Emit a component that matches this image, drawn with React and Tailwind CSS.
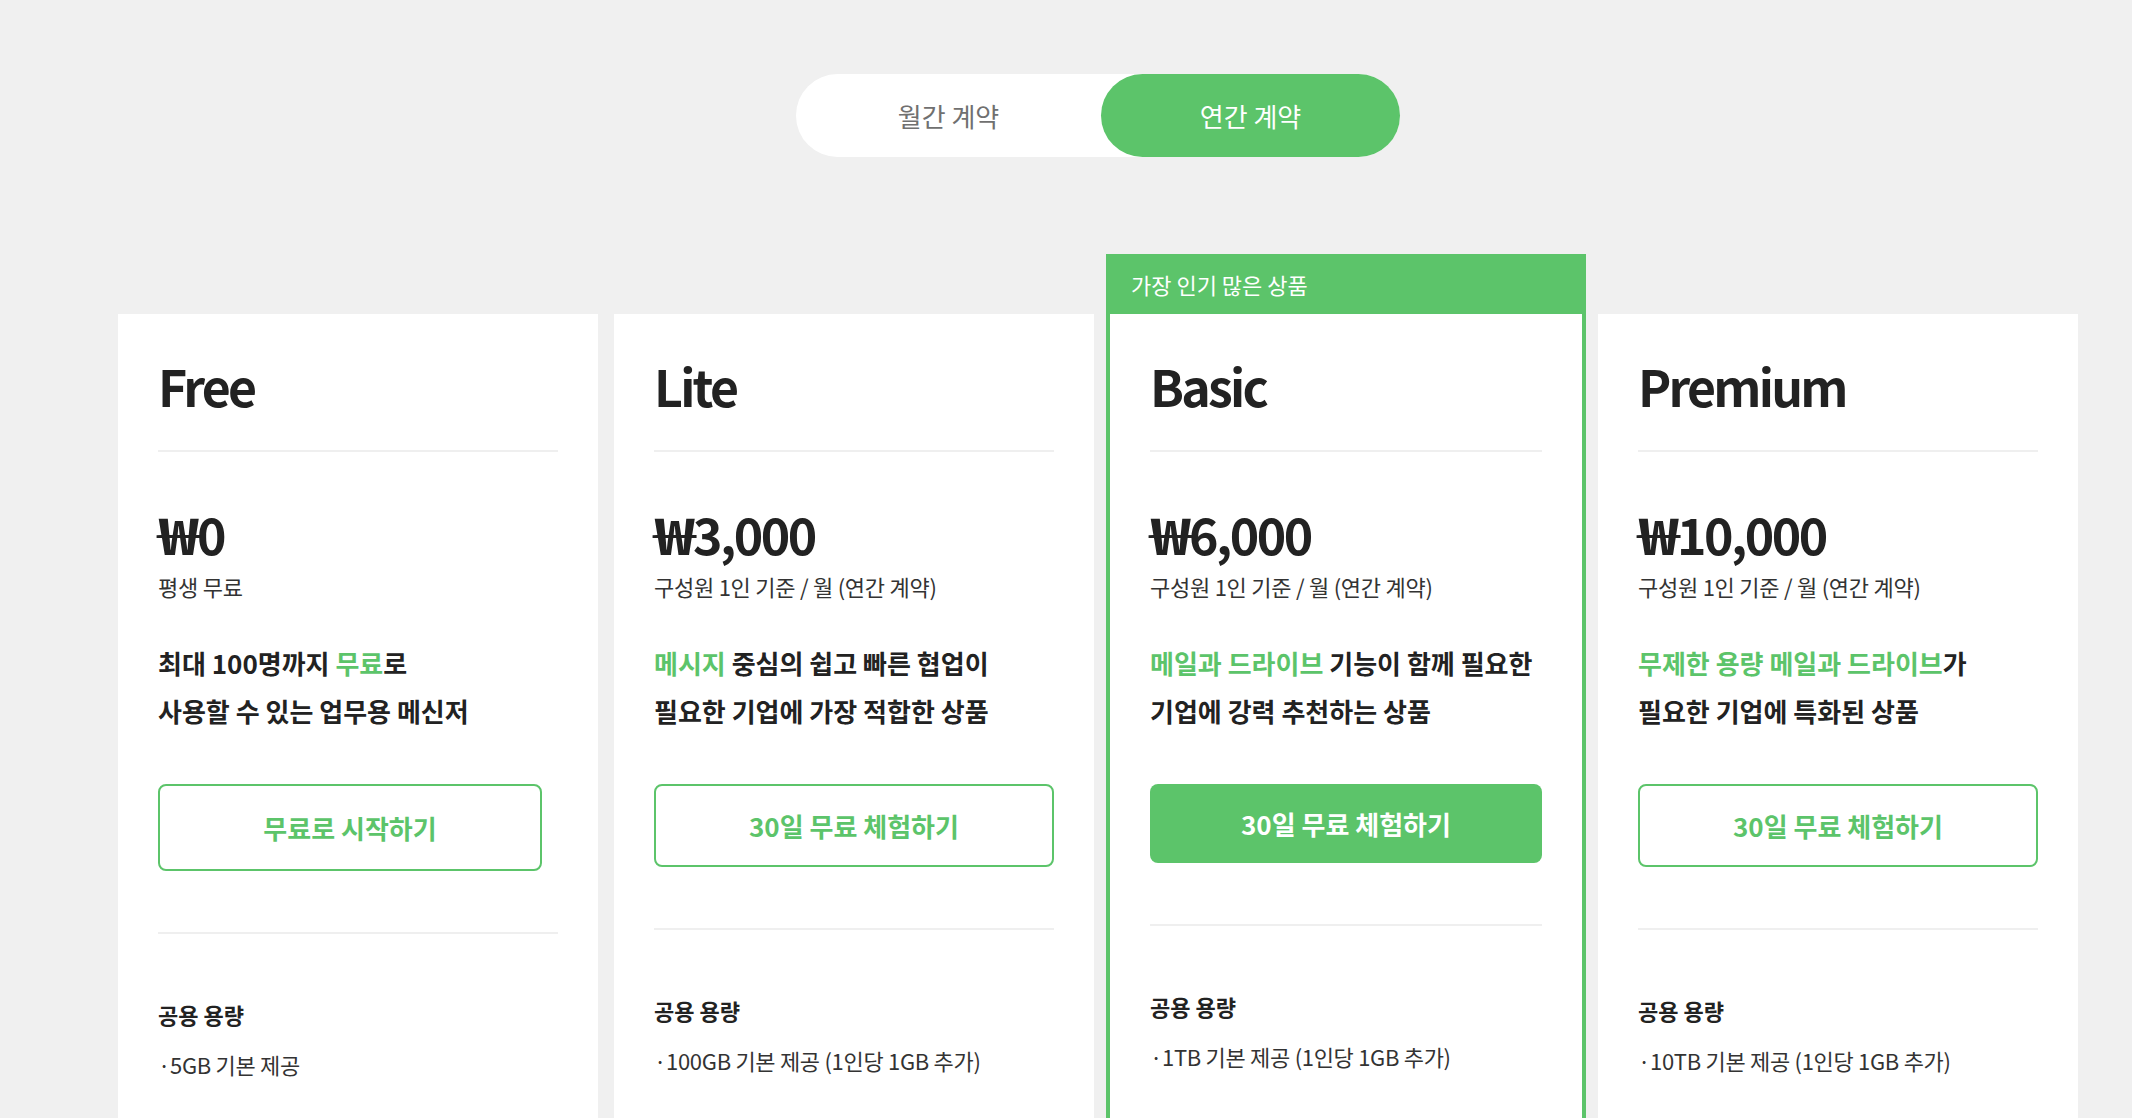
import React from "react";

const Green = ({ children }) => <span className="text-[#5cc46a]">{children}</span>;

const plans = [
  {
    name: "Free",
    price: "0",
    sub: "평생 무료",
    desc: (
      <>
        최대 100명까지 <Green>무료</Green>로
        <br />
        사용할 수 있는 업무용 메신저
      </>
    ),
    cta: "무료로 시작하기",
    btnSize: "w-[384px] h-[87px]",
    storage: "·5GB 기본 제공",
    gap: "ml-0",
  },
  {
    name: "Lite",
    price: "3,000",
    sub: "구성원 1인 기준 / 월 (연간 계약)",
    desc: (
      <>
        <Green>메시지</Green> 중심의 쉽고 빠른 협업이
        <br />
        필요한 기업에 가장 적합한 상품
      </>
    ),
    cta: "30일 무료 체험하기",
    btnSize: "w-full h-[83px]",
    storage: "·100GB 기본 제공 (1인당 1GB 추가)",
    gap: "ml-4",
  },
  {
    name: "Basic",
    featured: true,
    price: "6,000",
    sub: "구성원 1인 기준 / 월 (연간 계약)",
    desc: (
      <>
        <Green>메일과 드라이브</Green> 기능이 함께 필요한
        <br />
        기업에 강력 추천하는 상품
      </>
    ),
    cta: "30일 무료 체험하기",
    btnSize: "w-full h-[79px]",
    storage: "·1TB 기본 제공 (1인당 1GB 추가)",
    gap: "ml-3",
  },
  {
    name: "Premium",
    price: "10,000",
    sub: "구성원 1인 기준 / 월 (연간 계약)",
    desc: (
      <>
        <Green>무제한 용량 메일과 드라이브</Green>가
        <br />
        필요한 기업에 특화된 상품
      </>
    ),
    cta: "30일 무료 체험하기",
    btnSize: "w-full h-[83px]",
    storage: "·10TB 기본 제공 (1인당 1GB 추가)",
    gap: "ml-3",
  },
];

const PlanCard = ({ plan }) => {
  const body = (
    <div className="px-10 pt-[46px] pb-[200px]">
      <h3 className="text-[50px] leading-[50px] font-bold tracking-[-2.75px] text-[#222]">
        {plan.name}
      </h3>
      <div className="mt-[40px] h-[2px] bg-[#efefef]" />

      <p className="mt-[56px] text-[50px] leading-[50px] font-bold tracking-[-2.5px] text-[#222]">
        <span className="inline-block origin-left scale-x-[1.4] mr-[12px]">₩</span>
        {plan.price}
      </p>
      <p className="mt-[13px] text-[22px] leading-[30px] tracking-[-0.25px] text-[#333]">
        {plan.sub}
      </p>

      <p className="mt-[38px] text-[26px] leading-[48px] font-bold text-[#222]">
        {plan.desc}
      </p>

      {plan.featured ? (
        <button
          className={`mt-[49px] ${plan.btnSize} flex items-center justify-center rounded-[8px] bg-[#5cc46a] text-[26px] font-bold text-white`}
        >
          {plan.cta}
        </button>
      ) : (
        <button
          className={`mt-[49px] ${plan.btnSize} flex items-center justify-center rounded-[8px] border-2 border-[#5cc46a] bg-white text-[26px] font-bold text-[#5cc46a]`}
        >
          {plan.cta}
        </button>
      )}

      <div className="mt-[61px] h-[2px] bg-[#efefef]" />

      <p className="mt-[65px] text-[22px] leading-[30px] font-bold text-[#222]">
        공용 용량
      </p>
      <p className="mt-[20px] text-[22px] leading-[30px] tracking-[-0.3px] text-[#333]">
        {plan.storage}
      </p>
    </div>
  );

  if (plan.featured) {
    return (
      <div className={`${plan.gap} w-[480px] shrink-0`}>
        <div className="h-[60px] bg-[#5cc46a] px-[25px] flex items-center text-[22px] text-white">
          가장 인기 많은 상품
        </div>
        <div className="border-x-4 border-[#5cc46a] bg-white">{body}</div>
      </div>
    );
  }

  return (
    <div className={`${plan.gap} mt-[60px] w-[480px] shrink-0 bg-white`}>{body}</div>
  );
};

export default function App() {
  return (
    <div
      className="h-[1118px] w-full overflow-hidden bg-[#f0f0f0] pt-[74px]"
      style={{ fontFamily: '"Noto Sans CJK KR", "Noto Sans", sans-serif' }}
    >
      {/* billing toggle */}
      <div className="ml-[118px] w-[1960px] flex justify-center">
        <div className="flex h-[83px] w-[604px] rounded-full bg-white">
          <button className="flex-1 flex items-center justify-center text-[26px] text-[#707070]">
            월간 계약
          </button>
          <button className="w-[299px] flex items-center justify-center rounded-full bg-[#5cc46a] text-[26px] text-white">
            연간 계약
          </button>
        </div>
      </div>

      {/* plans */}
      <div className="mt-[97px] flex items-start pl-[118px]">
        {plans.map((plan) => (
          <PlanCard key={plan.name} plan={plan} />
        ))}
      </div>
    </div>
  );
}
